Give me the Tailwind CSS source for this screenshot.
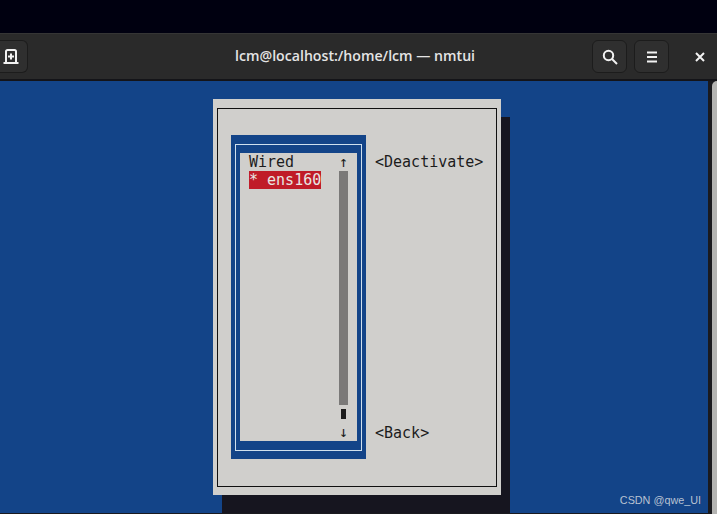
<!DOCTYPE html>
<html>
<head>
<meta charset="utf-8">
<script src="https://cdn.jsdelivr.net/npm/@tailwindcss/browser@4"></script>
</head>
<body class="w-[717px] h-[514px] overflow-hidden bg-[#000010]">
<div class="flex flex-col h-[514px]">
  <div class="h-[33px] shrink-0 bg-[#000010]"></div>
  <header class="relative h-[46px] shrink-0 flex items-center justify-between bg-[#2a2a2a] border-t border-[#353535]">
    <div class="w-[28px] h-[33px] rounded-r-md bg-[#2f2f2f] border border-l-0 border-[#1c1c1c] flex items-center justify-end pr-[9px]">
      <svg width="16" height="15" viewBox="0 0 16 15" fill="none" stroke="#f2f2f2" class="-mr-[1px]">
        <path d="M3 13.5V2.5a1.5 1.5 0 0 1 1.5-1.5h7A1.5 1.5 0 0 1 13 2.5v11" stroke-width="2"/>
        <path d="M0.5 14h15" stroke-width="2"/>
        <path d="M8 4.5v6M5 7.5h6" stroke-width="2"/>
      </svg>
    </div>
    <div class="absolute left-[235px] top-[12px] text-[14.15px] leading-[20px] font-semibold text-[#e4e4e4] whitespace-nowrap font-['Open_Sans',sans-serif]">lcm@localhost:/home/lcm — nmtui</div>
    <div class="flex items-center mr-[1px]">
      <div class="w-[35px] h-[33px] rounded-md bg-[#2f2f2f] border border-[#1c1c1c] flex items-center justify-center">
        <svg width="16" height="16" viewBox="0 0 16 16" fill="none" stroke="#f2f2f2" stroke-width="2"><circle cx="6.5" cy="6.5" r="4.7"/><path d="M10 10l5 5"/></svg>
      </div>
      <div class="w-[35px] h-[33px] ml-[7px] rounded-md bg-[#2f2f2f] border border-[#1c1c1c] flex items-center justify-center">
        <svg width="12" height="12" viewBox="0 0 12 12" fill="none" stroke="#f2f2f2" stroke-width="2"><path d="M1 1.5h10M1 6h10M1 10.5h10"/></svg>
      </div>
      <div class="w-[32px] ml-[15px] flex items-center justify-center">
        <svg width="10" height="10" viewBox="0 0 10 10" fill="none" stroke="#f2f2f2" stroke-width="2"><path d="M1 1l8 8M9 1l-8 8"/></svg>
      </div>
    </div>
  </header>
  <div class="h-[2px] shrink-0 bg-[#141418]"></div>
  <main class="flex flex-1 min-h-0 bg-[#1a1a1e]">
    <div class="relative w-[708px] h-[432px] bg-[#134488] pt-[18px] pl-[213px]">
      <div class="absolute left-[222px] top-[36px] w-[288px] h-[396px] bg-[#16151f]"></div>
      <div class="relative w-[288px] h-[396px] bg-[#d0cfcc] pt-[9px] pl-[4px] font-['DejaVu_Sans_Mono',monospace] text-[15px] leading-[18px] text-[#1c1c1c]">
        <div class="w-[280px] h-[379px] border border-[#101010] pt-[26px] pl-[13px] flex">
          <div class="w-[135px] h-[324px] bg-[#134488] p-[4px] pt-[9px] pb-[8px] shrink-0">
            <div class="w-[127px] h-[307px] border border-[#cfe0ee] pl-[4px] pt-[8px]">
              <div class="w-[117px] h-[288px] bg-[#d0cfcc] flex pl-[9px]">
                <div class="w-[90px]">
                  <div class="h-[18px]">Wired</div>
                  <div class="h-[18px] w-[72px] bg-[#c01c28] text-[#e8e6e3] whitespace-pre">* ens160</div>
                </div>
                <div class="w-[9px] flex flex-col">
                  <div class="h-[18px] text-center">↑</div>
                  <div class="h-[234px] bg-[#7a7978]"></div>
                  <div class="h-[18px] flex items-center justify-center"><div class="w-[5px] h-[10px] bg-[#1c1c1c]"></div></div>
                  <div class="h-[18px] text-center">↓</div>
                </div>
              </div>
            </div>
          </div>
          <div class="ml-[9px] pt-[18px] flex flex-col justify-between h-[306px] whitespace-pre">
            <div>&lt;Deactivate&gt;</div>
            <div class="translate-y-[1px]">&lt;Back&gt;</div>
          </div>
        </div>
      </div>
      <div class="absolute right-[7px] bottom-[6px] text-[10.8px] leading-[14px] text-[#b8c2d2] font-['Liberation_Sans',sans-serif]">CSDN @qwe_UI</div>
    </div>
    <div class="flex-1 ml-[4px] bg-[#b4b4b2] rounded-tl-md"></div>
  </main>
</div>
</body>
</html>
